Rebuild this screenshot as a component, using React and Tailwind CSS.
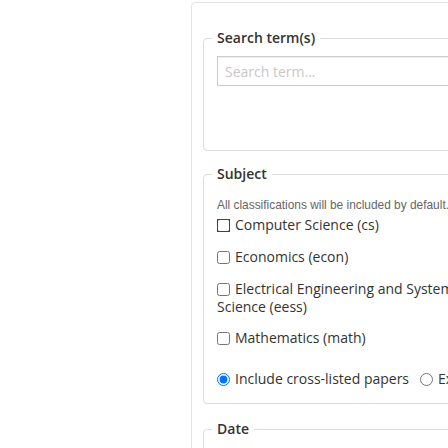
import React from "react";

const font = { fontFamily: "'Open Sans', 'Noto Sans', sans-serif" };

function Check({ label, red }) {
  return (
    <label className="block text-[14px] leading-[18px] text-[#333]">
      <input
        type="checkbox"
        readOnly
        className={
          "w-[13px] h-[13px] mr-[5px] align-[-2px] " +
          (red ? "outline outline-1 outline-offset-[-1px] outline-[#e00000]" : "")
        }
      />
      {label}
    </label>
  );
}

export default function App() {
  return (
    <div className="w-[448px] h-[448px] overflow-hidden bg-white" style={font}>
      <div className="ml-[191px] mt-[2px] w-[420px] h-[520px] border border-[#e3e3e3] rounded-[4px] pt-[24px] px-[11px]">
        <fieldset className="border border-[#dcdcdc] rounded-[4px] px-[8px] pb-[64px]">
          <legend className="px-[5px] text-[14px] leading-[22px] font-semibold text-[#333]">
            Search term(s)
          </legend>
          <div className="px-[5px] mt-[7px]">
            <input
              type="text"
              placeholder="Search term..."
              className="w-full h-[30px] border border-[#ccc] shadow-[inset_0_1px_1px_rgba(0,0,0,0.075)] pl-[7px] text-[14px] placeholder-[#c8c8c8] outline-none"
            />
          </div>
        </fieldset>

        <fieldset className="mt-[12px] border border-[#dcdcdc] rounded-[4px] px-[8px] pb-[15px]">
          <legend className="px-[5px] text-[14px] leading-[22px] font-semibold text-[#333]">
            Subject
          </legend>
          <div className="px-[5px] w-[290px]">
            <p className="mt-[13px] text-[11.9px] leading-[14px] text-[#666] whitespace-nowrap" style={{ fontFamily: "'Liberation Sans', Arial, sans-serif" }}>
              All classifications will be included by default.
            </p>
            <div className="mt-[4px]">
              <Check label="Computer Science (cs)" red />
            </div>
            <div className="mt-[14px]">
              <Check label="Economics (econ)" />
            </div>
            <div className="mt-[14px]">
              <Check label="Electrical Engineering and Systems Science (eess)" />
            </div>
            <div className="mt-[13px]">
              <Check label="Mathematics (math)" />
            </div>
            <div className="mt-[23px] flex whitespace-nowrap text-[14px] leading-[18px] text-[#333]">
              <label>
                <input type="radio" name="x" defaultChecked className="w-[13px] h-[13px] mr-[5px] align-[-2px]" />
                Include cross-listed papers
              </label>
              <label className="ml-[11px]">
                <input type="radio" name="x" className="w-[13px] h-[13px] mr-[5px] align-[-2px]" />
                Exclude cross-listed papers
              </label>
            </div>
          </div>
        </fieldset>

        <fieldset className="mt-[14px] border border-[#dcdcdc] rounded-[4px] px-[8px] pb-[40px]">
          <legend className="px-[5px] text-[14px] leading-[22px] font-semibold text-[#333]">
            Date
          </legend>
        </fieldset>
      </div>
    </div>
  );
}
